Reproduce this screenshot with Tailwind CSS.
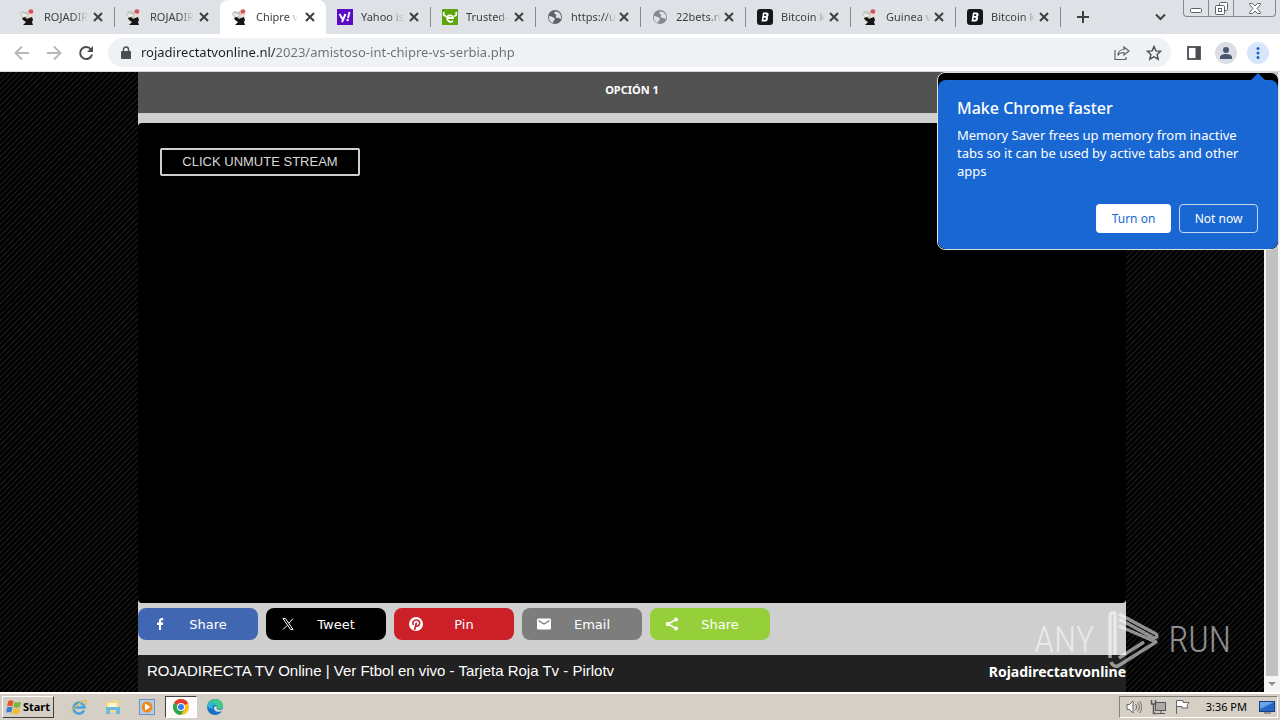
<!DOCTYPE html>
<html lang="es">
<head>
    <meta charset="UTF-8">
    <meta name="viewport" content="width=device-width, initial-scale=1.0">
    <title>Chipre vs Serbia</title>
    <script src="https://cdn.jsdelivr.net/npm/@tailwindcss/browser@4"></script>
</head>
<body class="h-screen flex flex-col overflow-hidden bg-[#d6cfc6] font-['Noto_Sans',sans-serif]">

    <!-- Shared icons -->
    <svg class="hidden">
        <symbol id="close" viewBox="0 0 10 10"><path d="M1 1l8 8M9 1L1 9" stroke="#3c4043" stroke-width="2" fill="none"/></symbol>
        <symbol id="roja" viewBox="0 0 16 16">
            <path d="M0 4l3-2 3 1 3-2 3 3-2 5-4 1-3-1-2-2z" fill="#c4c5c0"/>
            <path d="M1 4l5 1 2 2-5 1z" fill="#efece4"/>
            <path d="M9 4l5 1-3 5-3-1z" fill="#f0dccf"/>
            <circle cx="11" cy="2.500" r="2.300" fill="#d9505a"/>
            <path d="M2 9l3-1 2 2 2-1 3-1 1 3-1 2 1 3H3l3-3-3-2z" fill="#161616"/>
        </symbol>
        <symbol id="globe" viewBox="0 0 16 16">
            <circle cx="8" cy="8" r="7" fill="currentColor"/>
            <path d="M2 7c2 0 3 1 4.500 1.500S8 10 7.500 11 6 12 6 14c-3-1-4.500-4-4-7zM8 2.500c-1 1-1 2 0 2.500s2 1 1 2 0 2 2 2 2 1 3 1c1-4-2-7.500-6-7.500z" fill="#dee1e6"/>
        </symbol>
        <symbol id="bit" viewBox="0 0 16 16">
            <rect width="16" height="16" rx="3" fill="#15171c"/>
            <path d="M6 3.500h4l1.500 1v2.300L10.500 8l.7 1-.8 2.500-1.400 1H4.500zM7.300 5.300L7 7h2l.4-1.700zM6.700 8.700l-.3 2h2l.5-2z" fill="#fff" fill-rule="evenodd"/>
        </symbol>
    </svg>

    <!-- Tab strip -->
    <header class="h-[34px] shrink-0 flex bg-[#dee1e6] pl-[10px] text-[11px] text-[#3c4043]">
        <div class="w-[104px] flex items-center pl-[10px] pr-[11px]">
            <svg class="size-4 shrink-0"><use href="#roja"/></svg>
            <button class="ml-2 whitespace-nowrap [mask-image:linear-gradient(to_right,black_65%,transparent)]">ROJADIR</button>
            <button aria-label="Close tab" class="ml-auto"><svg class="size-[10px]"><use href="#close"/></svg></button>
        </div>
        <div class="h-5 w-px self-center bg-[#85898e]"></div>
        <div class="w-[105px] flex items-center pl-[11px] pr-[11px]">
            <svg class="size-4 shrink-0"><use href="#roja"/></svg>
            <button class="ml-2 whitespace-nowrap [mask-image:linear-gradient(to_right,black_65%,transparent)]">ROJADIR</button>
            <button aria-label="Close tab" class="ml-auto"><svg class="size-[10px]"><use href="#close"/></svg></button>
        </div>
        <div class="w-[106px] flex items-center rounded-t-lg bg-white pl-3 pr-[11px]">
            <svg class="size-4 shrink-0"><use href="#roja"/></svg>
            <button class="ml-2 whitespace-nowrap [mask-image:linear-gradient(to_right,black_75%,transparent)]">Chipre v</button>
            <button aria-label="Close tab" class="ml-auto"><svg class="size-[10px]"><use href="#close"/></svg></button>
        </div>
        <div class="w-[104px] flex items-center pl-[11px] pr-[11px]">
            <svg class="size-4 shrink-0" viewBox="0 0 16 16"><rect width="16" height="16" fill="#5a0bc8"/><path d="M2.500 5L5.500 10M8.500 5L5 13M11 9l1.500-6" stroke="#fff" stroke-width="1.900" fill="none"/><circle cx="10.600" cy="11" r="1.200" fill="#fff"/></svg>
            <button class="ml-2 whitespace-nowrap [mask-image:linear-gradient(to_right,black_65%,transparent)]">Yahoo is</button>
            <button aria-label="Close tab" class="ml-auto"><svg class="size-[10px]"><use href="#close"/></svg></button>
        </div>
        <div class="h-5 w-px self-center bg-[#85898e]"></div>
        <div class="w-[104px] flex items-center pl-[11px] pr-[11px]">
            <svg class="size-4 shrink-0" viewBox="0 0 16 16"><rect width="16" height="16" fill="#5fa30d"/><path d="M2 3c-1 3 0 4 2 4M14 3c1 3 0 4-2 4" stroke="#fff" stroke-width="1.800" fill="none"/><path d="M11 12c-3 2-6 0-6-3s6-4 6 0H6" stroke="#fff" stroke-width="1.800" fill="none"/></svg>
            <button class="ml-2 whitespace-nowrap [mask-image:linear-gradient(to_right,black_75%,transparent)]">Trusted-</button>
            <button aria-label="Close tab" class="ml-auto"><svg class="size-[10px]"><use href="#close"/></svg></button>
        </div>
        <div class="h-5 w-px self-center bg-[#85898e]"></div>
        <div class="w-[104px] flex items-center pl-[11px] pr-[11px]">
            <svg class="size-4 shrink-0 text-[#5f6368]"><use href="#globe"/></svg>
            <button class="ml-2 whitespace-nowrap [mask-image:linear-gradient(to_right,black_75%,transparent)]">https://u</button>
            <button aria-label="Close tab" class="ml-auto"><svg class="size-[10px]"><use href="#close"/></svg></button>
        </div>
        <div class="h-5 w-px self-center bg-[#85898e]"></div>
        <div class="w-[104px] flex items-center pl-[11px] pr-[11px]">
            <svg class="size-4 shrink-0 text-[#85898e]"><use href="#globe"/></svg>
            <button class="ml-2 whitespace-nowrap [mask-image:linear-gradient(to_right,black_75%,transparent)]">22bets.n</button>
            <button aria-label="Close tab" class="ml-auto"><svg class="size-[10px]"><use href="#close"/></svg></button>
        </div>
        <div class="h-5 w-px self-center bg-[#85898e]"></div>
        <div class="w-[104px] flex items-center pl-[11px] pr-[11px]">
            <svg class="size-4 shrink-0"><use href="#bit"/></svg>
            <button class="ml-2 whitespace-nowrap [mask-image:linear-gradient(to_right,black_75%,transparent)]">Bitcoin k</button>
            <button aria-label="Close tab" class="ml-auto"><svg class="size-[10px]"><use href="#close"/></svg></button>
        </div>
        <div class="h-5 w-px self-center bg-[#85898e]"></div>
        <div class="w-[104px] flex items-center pl-[11px] pr-[11px]">
            <svg class="size-4 shrink-0"><use href="#roja"/></svg>
            <button class="ml-2 whitespace-nowrap [mask-image:linear-gradient(to_right,black_75%,transparent)]">Guinea v</button>
            <button aria-label="Close tab" class="ml-auto"><svg class="size-[10px]"><use href="#close"/></svg></button>
        </div>
        <div class="h-5 w-px self-center bg-[#85898e]"></div>
        <div class="w-[104px] flex items-center pl-[11px] pr-[11px]">
            <svg class="size-4 shrink-0"><use href="#bit"/></svg>
            <button class="ml-2 whitespace-nowrap [mask-image:linear-gradient(to_right,black_75%,transparent)]">Bitcoin k</button>
            <button aria-label="Close tab" class="ml-auto"><svg class="size-[10px]"><use href="#close"/></svg></button>
        </div>
        <div class="h-5 w-px self-center bg-[#85898e]"></div>
        <button aria-label="New tab" class="ml-4"><svg class="size-3" viewBox="0 0 12 12"><path d="M6 0v12M0 6h12" stroke="#3c4043" stroke-width="2"/></svg></button>
        <button aria-label="Search tabs" class="ml-auto mr-[17px]"><svg class="w-[11px] h-2" viewBox="0 0 11 8"><path d="M1 1.500l4.500 4.500L10 1.500" stroke="#3c4043" stroke-width="2" fill="none"/></svg></button>
        <div class="mr-1 flex h-[17px] rounded-b border border-t-0 border-[#85898e]">
            <button aria-label="Minimize" class="w-[25px] flex items-end justify-center pb-[3px] border-r border-[#85898e]"><svg class="w-3 h-[5px]" viewBox="0 0 12 5"><rect x=".5" y=".5" width="11" height="4" rx="1" fill="#fff" stroke="#5f6368"/></svg></button>
            <button aria-label="Restore" class="w-[25px] flex items-center justify-center border-r border-[#85898e]"><svg class="size-[13px]" viewBox="0 0 13 13" fill="#fff" stroke="#5f6368"><rect x="4.500" y=".5" width="8" height="8" rx="1"/><rect x=".5" y="3.500" width="9" height="9" rx="1"/><rect x="3.500" y="6.500" width="3" height="3"/></svg></button>
            <button aria-label="Close" class="w-[41px] flex items-center justify-center"><svg class="w-3 h-[11px]" viewBox="0 0 12 11"><path d="M.5 .5h3L6 3l2.500-2.500h3v1L8 5.500l3.500 4v1h-3L6 8l-2.500 2.500h-3v-1L4 5.500.5 1.500z" fill="#fff" stroke="#5f6368"/></svg></button>
        </div>
    </header>

    <!-- Toolbar -->
    <nav class="h-[38px] shrink-0 flex items-center bg-white border-b border-[#d5d7da] pl-[14px] pr-[11px]">
        <button aria-label="Back"><svg class="size-4" viewBox="0 0 16 16"><path d="M15 8H2M8 1.500L1.500 8 8 14.500" stroke="#b4b7ba" stroke-width="1.800" fill="none"/></svg></button>
        <button aria-label="Forward" class="ml-4"><svg class="size-4" viewBox="0 0 16 16"><path d="M1 8h13M8 1.500L14.500 8 8 14.500" stroke="#b4b7ba" stroke-width="1.800" fill="none"/></svg></button>
        <button aria-label="Reload" class="ml-4"><svg class="size-4" viewBox="0 0 16 16"><path d="M13 4.500A6 6 0 1 0 14 9.500" stroke="#4a4d51" stroke-width="2" fill="none"/><path d="M15 1v6H9z" fill="#4a4d51"/></svg></button>
        <form class="ml-[14px] h-[29px] flex-1 flex items-center rounded-full bg-[#eff2f5] pl-[13px] pr-[9px]">
            <svg class="w-[10px] h-[14px]" viewBox="0 0 10 14"><path d="M2.500 6V3.500a2.500 2.500 0 0 1 5 0V6" stroke="#4a4d51" stroke-width="1.400" fill="none"/><rect y="5" width="10" height="8" rx="1" fill="#4a4d51"/></svg>
            <input aria-label="Address" value="rojadirectatvonline.nl/2023/amistoso-int-chipre-vs-serbia.php" class="ml-[10px] flex-1 min-w-0 text-[13px] text-transparent bg-clip-text bg-[linear-gradient(to_right,#202124_134px,#6b7075_134px)] outline-none">
            <button type="button" aria-label="Share page"><svg class="size-4" viewBox="0 0 16 16" fill="none" stroke="#5f6368" stroke-width="1.200"><path d="M1 5v9.500h11V12"/><path d="M10 2l5 4-5 4V7.500c-3 0-5 1-6 3 0-4 3-6 6-6z"/></svg></button>
            <button type="button" aria-label="Bookmark" class="ml-4"><svg class="size-4" viewBox="0 0 16 16"><path d="M8 1.500l1.900 4.400 4.800.4-3.600 3.200 1.100 4.700L8 11.700l-4.200 2.500 1.100-4.700L1.300 6.300l4.800-.4z" stroke="#4a4d51" stroke-width="1.400" fill="none"/></svg></button>
        </form>
        <button aria-label="Side panel" class="ml-4"><svg class="w-[14px] h-[14px]" viewBox="0 0 14 14"><rect x="1" y="1" width="12" height="12" fill="none" stroke="#4a4d51" stroke-width="1.800"/><rect x="8.500" y="1" width="4.500" height="12" fill="#4a4d51"/></svg></button>
        <button aria-label="Profile" class="ml-[14px] size-[22px] rounded-full bg-[#dbdee4] flex items-center justify-center"><svg class="size-3" viewBox="0 0 12 12" fill="#4a5770"><circle cx="6" cy="3" r="3"/><path d="M0 12V10c0-2 3-3 6-3s6 1 6 3v2z"/></svg></button>
        <button aria-label="Menu" class="ml-[10px] size-[22px] rounded-full bg-[#d8e6fc] flex items-center justify-center"><svg class="w-1 h-3" viewBox="0 0 4 12" fill="#1a62c8"><circle cx="2" cy="1.500" r="1.500"/><circle cx="2" cy="6" r="1.500"/><circle cx="2" cy="10.500" r="1.500"/></svg></button>
    </nav>

    <!-- Page -->
    <div class="relative flex-1 min-h-0 flex bg-black">
        <div class="flex-1 flex justify-center bg-[repeating-linear-gradient(135deg,#202020_0px,#000_1px,#000_3px,#202020_4px)]">
            <main class="w-full max-w-[988px] flex flex-col bg-[#cfcfcf]">
                <a href="#" class="h-[41px] shrink-0 flex items-center justify-center bg-[#525252] pb-1 text-[11px] font-bold text-white">OPCIÓN 1</a>
                <section class="mt-[10px] flex-1 rounded bg-black pl-[22px] pt-[25px]">
                    <button class="h-7 w-[200px] rounded-xs border-2 border-[#cfcfcf] font-['Liberation_Sans',sans-serif] text-[13px] text-[#d8d8d8]">CLICK UNMUTE STREAM</button>
                </section>
                <div class="flex gap-2 pt-[5px] pb-[15px] font-['DejaVu_Sans',sans-serif] text-[13px] text-white">
                    <button class="h-8 w-[120px] flex items-center rounded-lg bg-[#4267b2] pl-[14px]">
                        <svg class="size-4" viewBox="0 0 16 16"><path d="M7 14V9H5V6.500h2V5c0-2 1-3 3-3h1.200v2.300H10c-.7 0-1 .3-1 1v1.200h2.200L10.800 9H9v5z" fill="#fff"/></svg>
                        <span class="flex-1 pr-[10px] pt-px text-center">Share</span>
                    </button>
                    <button class="h-8 w-[120px] flex items-center rounded-lg bg-black pl-[14px]">
                        <svg class="size-4" viewBox="0 0 16 16" fill="none" stroke="#fff"><path d="M3 2.500h2.500l7.500 11h-2.500zM13 2.500L9 7M7 9.500l-4 4"/></svg>
                        <span class="flex-1 pr-[10px] pt-px text-center">Tweet</span>
                    </button>
                    <button class="h-8 w-[120px] flex items-center rounded-lg bg-[#cb2027] pl-[14px]">
                        <svg class="size-4" viewBox="0 0 16 16"><circle cx="8" cy="8" r="7" fill="#fff"/><path d="M5.500 9C3.500 6 6 4 8.500 4s3.500 2 3 4-2.500 3-3.800 1.500M8.500 6.500L6.500 14" stroke="#cb2027" stroke-width="1.600" fill="none"/></svg>
                        <span class="flex-1 pr-[10px] pt-px text-center">Pin</span>
                    </button>
                    <button class="h-8 w-[120px] flex items-center rounded-lg bg-[#7d7d7d] pl-[14px]">
                        <svg class="size-4" viewBox="0 0 16 16"><rect x="1" y="2.500" width="14" height="11" rx="1.200" fill="#fff"/><path d="M2.500 4.500L8 8l5.500-3.500" stroke="#7d7d7d" stroke-width="1.400" fill="none"/></svg>
                        <span class="flex-1 pr-[10px] pt-px text-center">Email</span>
                    </button>
                    <button class="h-8 w-[120px] flex items-center rounded-lg bg-[#95d03a] pl-[14px]">
                        <svg class="size-4" viewBox="0 0 16 16" fill="#fff"><path d="M12 3.500L4 8l8 4.500" stroke="#fff" stroke-width="1.500" fill="none"/><circle cx="12" cy="3.500" r="2"/><circle cx="4" cy="8" r="2.200"/><circle cx="12" cy="12.500" r="2"/></svg>
                        <span class="flex-1 pr-[10px] pt-px text-center">Share</span>
                    </button>
                </div>
                <footer class="h-[37px] shrink-0 flex items-center justify-between bg-[#212121] pl-[9px] pb-1 text-white">
                    <p class="font-['Liberation_Sans',sans-serif] text-[15px]">ROJADIRECTA TV Online | Ver Ftbol en vivo - Tarjeta Roja Tv - Pirlotv</p>
                    <a href="#" class="text-sm font-bold">Rojadirectatvonline</a>
                </footer>
            </main>
        </div>

        <!-- Scrollbar -->
        <div class="w-4 flex flex-col items-center bg-[#f4f4f4]">
            <div class="w-3 flex-1 bg-[#c1c1c1]"></div>
            <svg class="size-4" viewBox="0 0 16 16"><path d="M4 6h8l-4 4z" fill="#909090"/></svg>
        </div>

        <!-- Memory saver bubble -->
        <aside class="absolute top-0 right-px w-[342px] rounded-lg border border-[#d9e2d8] bg-black pt-[7px] text-white">
            <svg class="absolute right-3 top-0 w-4 h-2" viewBox="0 0 16 8"><path d="M0 8l8-8 8 8z" fill="#1967d2"/></svg>
            <div class="rounded-lg bg-[#1967d2] pl-[19px] pr-5 pt-4 pb-4">
                <h2 class="text-base leading-6 font-medium">Make Chrome faster</h2>
                <p class="mt-[6px] text-[13px] leading-[18px]">Memory Saver frees up memory from inactive tabs so it can be used by active tabs and other apps</p>
                <div class="mt-6 flex justify-end gap-2 text-xs">
                    <button class="h-[29px] w-[75px] rounded bg-white text-[#1967d2]">Turn on</button>
                    <button class="h-[29px] w-[79px] rounded border border-[#c5daf5]">Not now</button>
                </div>
            </div>
        </aside>

        <!-- Watermark -->
        <div class="absolute right-[49px] bottom-[22px] flex items-center text-white/55 font-['Roboto_Condensed','Liberation_Sans_Narrow',sans-serif] text-4xl leading-[60px] font-light pointer-events-none">
            <span>ANY</span>
            <svg class="mx-2 w-[58px] h-[60px]" viewBox="0 0 58 60" fill="none" stroke="currentColor" stroke-width="3.500" stroke-linejoin="round"><path d="M8 48V6c0-3 3-4 5-3v42M17 4L54 24c2 2 1 4-2 4L17 9M17 16l37 16-38 24c-3 1-6-1-7-4M17 48l25-16"/></svg>
            <span>RUN</span>
        </div>
    </div>

    <!-- Taskbar -->
    <footer class="h-7 shrink-0 flex items-center border-t-2 border-white bg-[#d6cfc6] pl-[2px] pr-[2px] text-[11px] text-black">
        <button class="h-[22px] w-[52px] flex items-center justify-center gap-px border border-t-white border-l-white border-r-[#404040] border-b-[#404040] font-bold">
            <svg class="size-4" viewBox="0 0 15 15"><path d="M2 2c2-1 3-1 5 0L6 7C4 6 3 6 1 7z" fill="#e5582b"/><path d="M8 2.500c2 1 4 1 6 0l-1 5c-2 1-4 1-6 0z" fill="#79b540"/><path d="M1 8c2-1 3-1 5 0l-1 5c-2-1-3-1-5 0z" fill="#3d7fd0"/><path d="M7 8.500c2 1 4 1 6 0l-1 5c-2 1-4 1-6 0z" fill="#f2bd28"/></svg>
            Start
        </button>
        <button aria-label="Internet Explorer" class="ml-[17px]"><svg class="size-4" viewBox="0 0 16 16" fill="none"><path d="M13 11.500A5.500 5.500 0 1 1 13.500 8.500H4" stroke="#45a5e0" stroke-width="2.600"/><path d="M1 14C-1 11 12 0 15 2c1 1 0 3-1 4" stroke="#e8b93a" stroke-width="1.300"/></svg></button>
        <button aria-label="Explorer" class="ml-[18px]"><svg class="size-4" viewBox="0 0 16 16"><path d="M1 3h5l1-2h7v12H1z" fill="#efd98a"/><path d="M3 4h9v4H3z" fill="#fbf3c9"/><path d="M1 8h14v7h-4v-4H5v4H1z" fill="#6fb9dd"/></svg></button>
        <button aria-label="Media Player" class="ml-[18px]"><svg class="size-4" viewBox="0 0 16 16"><rect x=".5" y=".5" width="15" height="15" fill="#b5cce6" stroke="#6c93c2"/><circle cx="8" cy="8" r="5.500" fill="#f08a1c"/><path d="M6 4.500L11.500 8 6 11.500z" fill="#fff"/></svg></button>
        <button aria-label="Chrome" class="ml-[10px] h-[22px] w-8 flex items-center justify-center border border-t-[#404040] border-l-[#404040] border-white bg-[#fdfcfa]"><svg class="size-4" viewBox="0 0 16 16"><circle cx="8" cy="8" r="8" fill="#fbc116"/><path d="M8 8L1.070 4a8 8 0 0 1 13.860 0z" fill="#e33b2e"/><path d="M8 8L1.070 4A8 8 0 0 0 8 16l3.500-6z" fill="#2da94f"/><path d="M8 4h6.930L8 8z" fill="#e33b2e"/><circle cx="8" cy="8" r="4" fill="#fff"/><circle cx="8" cy="8" r="3" fill="#3b7ded"/></svg></button>
        <button aria-label="Edge" class="ml-[10px]"><svg class="size-4" viewBox="0 0 16 16"><circle cx="8" cy="8" r="8" fill="#1673c6"/><path d="M0 8C1 2 5 0 8 0c5 0 8 3 8 7 0 3-4 4-6 3 1-2 0-4-3-4C4 6 1 6 0 8z" fill="#43c98a"/><path d="M0 8c1-5 7-6 9-3-3 0-4 3-3 5z" fill="#31b3dd"/><path d="M7 8c-1 4 4 6 8 4l1-3c-2 3-6 2-6 1-1 0 0-1 0-2-1-1-2-1-3 0z" fill="#d9ddd8"/></svg></button>

        <div class="ml-auto h-[22px] flex items-center border border-t-[#85807a] border-l-[#85807a] border-white pl-[6px] pr-[2px]">
            <svg class="size-4" viewBox="0 0 16 16" fill="#fff" stroke="#666" stroke-width="1"><path d="M1 5.500h2.500L7 2v12L3.500 10.500H1z"/><path d="M9.500 5c1.500 2 1.500 4 0 6M11.500 3.500c2.500 3 2.500 6 0 9M13.500 2c3 4 3 8 0 12" fill="none"/></svg>
            <svg class="ml-2 size-4" viewBox="0 0 16 16" stroke="#555"><rect x="5.500" y="3.500" width="10" height="8" fill="#aaa"/><path d="M7 14.500h8M11 12v2" fill="none"/><path d="M1.500 1v4h4V1M3.500 5v9.500h3" fill="none" stroke-width="1.500"/></svg>
            <svg class="ml-2 size-4" viewBox="0 0 16 16" fill="#fff" stroke="#666"><path d="M2.500 15V1.500H9v2h6l-2 3 1 2.500H8V7.500H3"/></svg>
            <time class="ml-4">3:36 PM</time>
            <svg class="ml-3 w-4 h-[14px]" viewBox="0 0 16 14"><rect x=".5" y="1.500" width="15" height="10" fill="#2767c8" stroke="#183f80"/><path d="M1 2h14L1 9z" fill="#6aa5ea"/><path d="M5 13h7" stroke="#555"/></svg>
        </div>
    </footer>
</body>
</html>
